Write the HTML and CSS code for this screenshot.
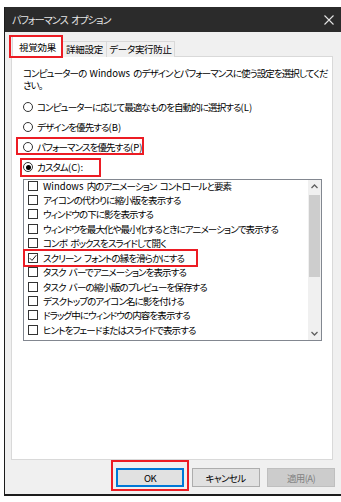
FILE: index.html
```html
<!DOCTYPE html>
<html>
<head>
    <title>パフォーマンス オプション</title>
    <link rel="stylesheet" href="styles.css">
</head>
<body>
    <div class="window">
        <div class="titlebar">
            <span class="title">パフォーマンス オプション</span>
            <svg class="close" width="10" height="10" viewBox="0 0 10 10">
                <path d="M0.5 0.5 L9.5 9.5 M9.5 0.5 L0.5 9.5" stroke="#e4e4e4" stroke-width="1.1" fill="none"/>
            </svg>
        </div>

        <div class="tabs">
            <div class="tab active">視覚効果</div>
            <div class="tab">詳細設定</div>
            <div class="tab">データ実行防止</div>
        </div>

        <div class="panel">
            <p class="desc"><span class="line">コンピューターの <span class="latin">Windows</span> のデザインとパフォーマンスに使う設定を選択してくだ</span><span class="line">さい。</span></p>

            <div class="radios">
                <div class="radio"><span class="circle"></span>コンピューターに応じて最適なものを自動的に選択する<span class="latin">(L)</span></div>
                <div class="radio"><span class="circle"></span>デザインを優先する<span class="latin">(B)</span></div>
                <div class="radio"><span class="circle"></span>パフォーマンスを優先する<span class="latin">(P)</span></div>
                <div class="radio"><span class="circle checked"></span>カスタム<span class="latin">(C):</span></div>
            </div>

            <div class="listbox">
                <ul class="items">
                    <li><span class="box"></span><span class="latin">Windows</span>&nbsp;内のアニメーション コントロールと要素</li>
                    <li><span class="box"></span>アイコンの代わりに縮小版を表示する</li>
                    <li><span class="box"></span>ウィンドウの下に影を表示する</li>
                    <li><span class="box"></span>ウィンドウを最大化や最小化するときにアニメーションで表示する</li>
                    <li><span class="box"></span>コンボ ボックスをスライドして開く</li>
                    <li><span class="box"><svg width="8" height="8" viewBox="0 0 8 8"><path d="M0.8 4.2 L3 6.4 L7.3 1.2" stroke="#222" stroke-width="1" fill="none"/></svg></span>スクリーン フォントの縁を滑らかにする</li>
                    <li><span class="box"></span>タスク バーでアニメーションを表示する</li>
                    <li><span class="box"></span>タスク バーの縮小版のプレビューを保存する</li>
                    <li><span class="box"></span>デスクトップのアイコン名に影を付ける</li>
                    <li><span class="box"></span>ドラッグ中にウィンドウの内容を表示する</li>
                    <li><span class="box"></span>ヒントをフェードまたはスライドで表示する</li>
                </ul>
                <div class="scrollbar">
                    <svg class="arrow" width="13" height="13" viewBox="0 0 13 13"><path d="M3.5 8 L6.5 5 L9.5 8" stroke="#606060" stroke-width="1.3" fill="none"/></svg>
                    <div class="track"><div class="thumb"></div></div>
                    <svg class="arrow" width="13" height="13" viewBox="0 0 13 13"><path d="M3.5 5 L6.5 8 L9.5 5" stroke="#606060" stroke-width="1.3" fill="none"/></svg>
                </div>
            </div>
        </div>

        <div class="buttons">
            <button class="btn default">OK</button>
            <button class="btn">キャンセル</button>
            <button class="btn" disabled>適用(A)</button>
        </div>

        <!-- red annotation frames -->
        <div class="mark mark-tab"></div>
        <div class="mark mark-perf"></div>
        <div class="mark mark-custom"></div>
        <div class="mark mark-font"></div>
        <div class="mark mark-ok"></div>
    </div>
</body>
</html>
```

FILE: styles.css
```css
body {
    margin: 0;
    background: #fff;
    font-family: "Noto Sans CJK JP", "Noto Sans", sans-serif;
    font-size: 9.5px;
    letter-spacing: -0.9px;
    word-spacing: 2px;
    font-feature-settings: "palt";
    color: #000;
}

.latin {
    letter-spacing: 0;
    word-spacing: 0;
}

.window {
    position: relative;
    box-sizing: border-box;
    width: 337px;
    height: 489px;
    margin: 7px 0 0 4px;
    background: #f0f0f0;
    border-left: 1px solid #1c1c1c;
    border-bottom: 2px solid #1c1c1c;
}

.titlebar {
    height: 25px;
    background: #2b2b2b;
    display: flex;
    align-items: center;
    justify-content: space-between;
    padding: 0 7px 0 7px;
}

.title {
    color: #e6e6e6;
    font-size: 10px;
}

.tabs {
    display: flex;
    align-items: flex-end;
    margin: 4px 0 -1px 7px;
    position: relative;
    z-index: 1;
}

.tab {
    box-sizing: border-box;
    height: 16px;
    line-height: 14px;
    padding: 0;
    border: 1px solid #d9d9d9;
    border-bottom: none;
    background: #f0f0f0;
    text-align: center;
    white-space: nowrap;
    letter-spacing: -0.3px;
}

.tab + .tab {
    border-left: none;
}

.tab.active {
    height: 21px;
    line-height: 20px;
    width: 51px;
    background: #fff;
}

.tabs .tab:nth-child(2) { width: 44px; }
.tabs .tab:nth-child(3) { width: 68px; }

.panel {
    box-sizing: border-box;
    width: 322px;
    height: 404px;
    margin-left: 6px;
    background: #fff;
    border: 1px solid #d9d9d9;
    padding: 10px 0 0 11px;
}

.desc {
    margin: 0 0 6px;
    white-space: nowrap;
}

.desc .line {
    display: block;
    height: 12px;
    line-height: 12px;
}

.radio {
    height: 20px;
    display: flex;
    align-items: center;
    white-space: nowrap;
}

.circle {
    box-sizing: border-box;
    width: 10px;
    height: 10px;
    border: 1px solid #333;
    border-radius: 50%;
    margin-right: 4px;
    display: flex;
    align-items: center;
    justify-content: center;
    flex-shrink: 0;
}

.circle.checked::after {
    content: "";
    width: 5px;
    height: 5px;
    border-radius: 50%;
    background: #000;
}

.listbox {
    box-sizing: border-box;
    width: 299px;
    height: 162px;
    margin-top: 2px;
    border: 1px solid #828790;
    display: flex;
    overflow: hidden;
}

.items {
    flex: 1;
    list-style: none;
    margin: -1.7px 0 0;
    padding: 0 0 0 4px;
}

.items li {
    height: 14.45px;
    display: flex;
    align-items: center;
    white-space: nowrap;
}

.box {
    box-sizing: border-box;
    width: 10px;
    height: 10px;
    border: 1px solid #333;
    margin-right: 5px;
    display: flex;
    align-items: center;
    justify-content: center;
    flex-shrink: 0;
}

.scrollbar {
    width: 13px;
    background: #f0f0f0;
    display: flex;
    flex-direction: column;
}

.arrow {
    display: block;
    flex-shrink: 0;
}

.track {
    flex: 1;
    padding-top: 2px;
}

.thumb {
    margin: 0 1px;
    height: 82px;
    background: #cdcdcd;
}

.buttons {
    display: flex;
    justify-content: flex-end;
    gap: 7.5px;
    padding: 8px 6px 0 0;
}

.btn {
    box-sizing: border-box;
    width: 68px;
    height: 19px;
    padding: 0;
    font-family: inherit;
    font-size: 9.5px;
    letter-spacing: -0.6px;
    font-feature-settings: "palt";
    color: #000;
    background: #e1e1e1;
    border: 1px solid #adadad;
}

.btn.default {
    border-color: #0078d7;
    box-shadow: inset 0 0 0 1px #0078d7;
}

.btn:disabled {
    color: #838383;
    background: #cccccc;
    border-color: #bfbfbf;
}

/* annotation frames drawn over the dialog */
.mark {
    position: absolute;
    box-sizing: border-box;
    border: 2px solid #ec1c24;
    z-index: 2;
}

.mark-tab { left: 4px; top: 28px; width: 54px; height: 23px; }
.mark-perf { left: 11px; top: 130px; width: 128px; height: 18px; }
.mark-custom { left: 15px; top: 151px; width: 81px; height: 19px; }
.mark-font { left: 18px; top: 242px; width: 175px; height: 18px; }
.mark-ok { left: 106px; top: 453px; width: 78px; height: 31px; }
```
